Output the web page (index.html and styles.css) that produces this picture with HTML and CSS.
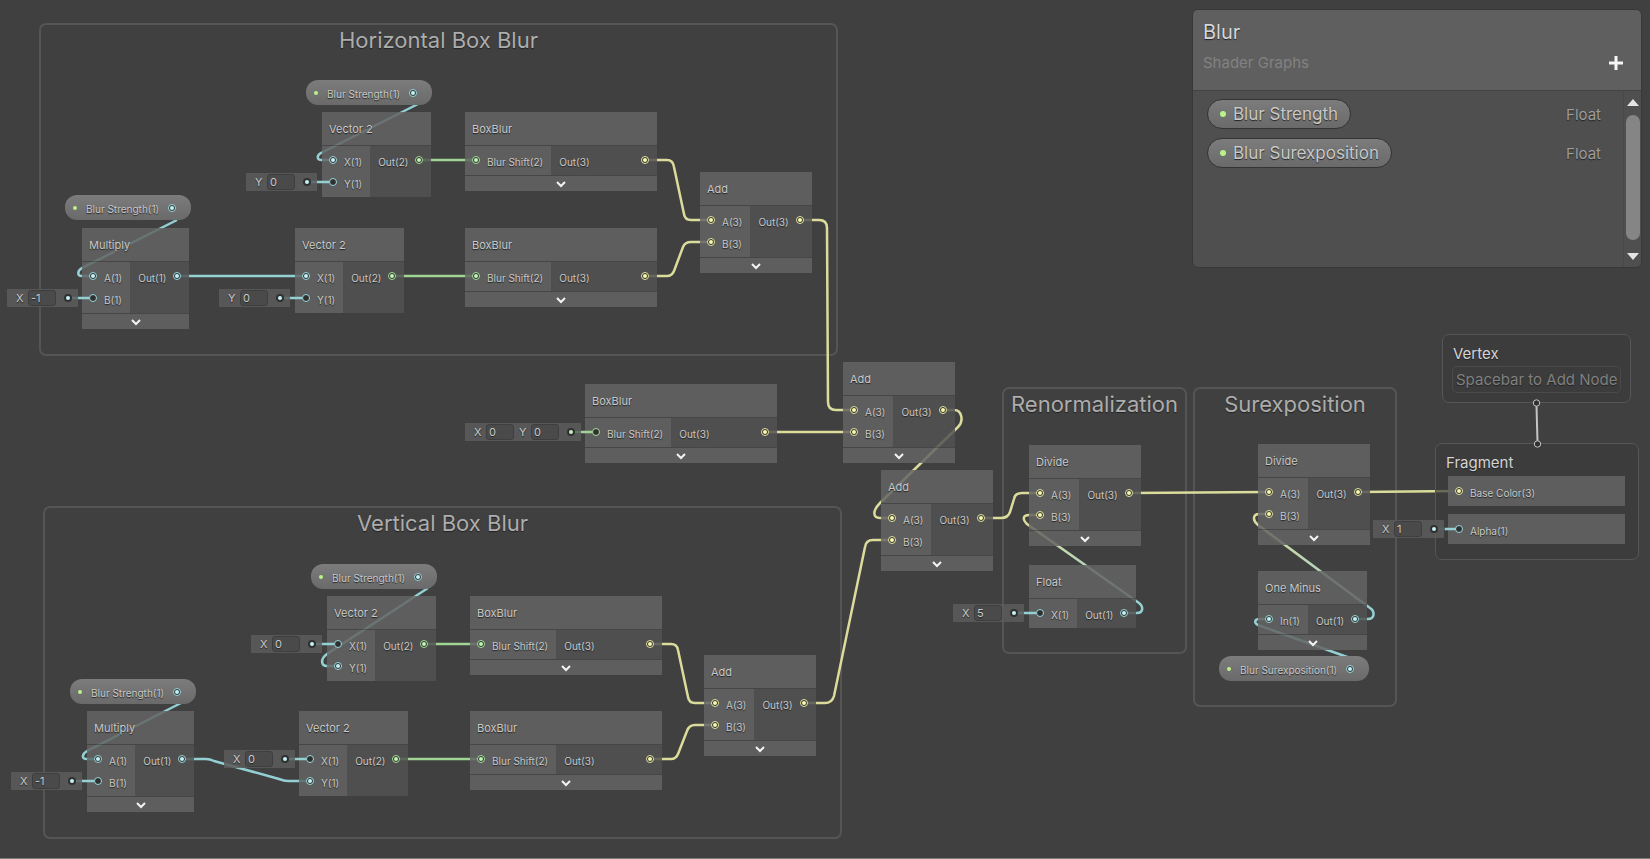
FILE: index.html
```html
<!DOCTYPE html>
<html lang="en">
<head>
<meta charset="utf-8">
<title>Blur - Shader Graph</title>
<link rel="stylesheet" href="styles.css">
</head>
<body>
<main class="canvas">
  <section class="group group-horizontal"><h2>Horizontal Box Blur</h2></section>
  <section class="group group-vertical"><h2>Vertical Box Blur</h2></section>
  <section class="group group-renormalization"><h2>Renormalization</h2></section>
  <section class="group group-surexposition"><h2>Surexposition</h2></section>

  <svg class="wires" stroke-width="2.500" aria-hidden="true">
    <defs>
      <linearGradient id="fade-a" gradientUnits="userSpaceOnUse" x1="1138" y1="614" x2="1027" y2="515"><stop offset="0" stop-color="#93cfd3"/><stop offset="1" stop-color="#dbdc9b"/></linearGradient>
      <linearGradient id="fade-b" gradientUnits="userSpaceOnUse" x1="1370" y1="619" x2="1257" y2="514"><stop offset="0" stop-color="#93cfd3"/><stop offset="1" stop-color="#dbdc9b"/></linearGradient>
    </defs>
    <g class="wire-float">
      <path d="M418 104L321 153C317 155 316 160 322 160H333"/>
      <path d="M177 220L82 268C77 271 77 276 82 276H93"/>
      <path d="M180 276H306"/>
      <path d="M428 588L327 654C320 659 321 666 327 666H338"/>
      <path d="M181 703L87 751C82 754 81 759 87 759H98"/>
      <path d="M184 759H206Q210 759 214 761L279 779Q284 781 288 781H310"/>
      <path d="M1350 658L1258 625C1254 623 1254 619 1260 619H1269"/>
      <path d="M308 182H318M68 298H78M281 298H291M312 644H323M73 781H83M285 759H296M1014 613H1025M1434 529H1445"/>
    </g>
    <g class="wire-vec2">
      <path d="M420 160H476M393 276H476M425 644H480M398 759H480M571 432H581"/>
    </g>
    <g class="wire-vec3">
      <path d="M646 160H667Q673 160 674 167L684 214Q685 220 691 220H711"/>
      <path d="M646 276H667Q672 276 674 271L683 247Q685 242 691 242H711"/>
      <path d="M801 220H819Q827 220 827 228L828 402Q828 410 836 410H854"/>
      <path d="M766 432H854"/>
      <path d="M944 410H954C962 410 964 421 958 427L880 503C872 511 873 518 880 518H892"/>
      <path d="M650 644H671Q677 644 678 650L688 697Q689 703 695 703H715"/>
      <path d="M650 759H671Q676 759 678 754L687 731Q689 725 695 725H715"/>
      <path d="M805 703H825Q832 703 834 696L865 547Q866 540 873 540H892"/>
      <path d="M982 518H1001Q1008 518 1010 512L1014 499Q1015 493 1022 493H1040"/>
      <path d="M1130 493L1269 492"/>
      <path d="M1359 492L1459 491"/>
    </g>
    <path stroke="url(#fade-a)" d="M1126 613H1137C1143 613 1144 607 1139 603L1027 524C1022 519 1023 515 1029 515H1040"/>
    <path stroke="url(#fade-b)" d="M1357 619H1368C1375 619 1375 611 1370 608L1258 525C1252 520 1253 514 1259 514H1269"/>
  </svg>

  <!-- Horizontal Box Blur -->
  <div class="token at-h-token-a"><i class="dot"></i><span>Blur Strength(1)</span><i class="port float on"></i></div>
  <article class="node at-h-vector-a">
    <h3>Vector 2</h3>
    <div class="ports">
      <ul class="in"><li><i class="port float on"></i><span>X(1)</span></li><li><i class="port float"></i><span>Y(1)</span></li></ul>
      <ul class="out"><li><span>Out(2)</span><i class="port vec2 on"></i></li></ul>
    </div>
  </article>
  <div class="slot at-h-slot-a"><label for="h-slot-a">Y</label><input id="h-slot-a" value="0"><i class="pin float"></i></div>
  <article class="node wide at-h-box-a">
    <h3>BoxBlur</h3>
    <div class="ports">
      <ul class="in"><li><i class="port vec2 on"></i><span>Blur Shift(2)</span></li></ul>
      <ul class="out"><li><span>Out(3)</span><i class="port vec3 on"></i></li></ul>
    </div>
    <button class="fold" aria-label="Collapse"><svg viewBox="0 0 12 8"><path d="M2 2L6 6L10 2"/></svg></button>
  </article>
  <div class="token at-h-token-b"><i class="dot"></i><span>Blur Strength(1)</span><i class="port float on"></i></div>
  <article class="node at-h-multiply">
    <h3>Multiply</h3>
    <div class="ports">
      <ul class="in"><li><i class="port float on"></i><span>A(1)</span></li><li><i class="port float"></i><span>B(1)</span></li></ul>
      <ul class="out"><li><span>Out(1)</span><i class="port float on"></i></li></ul>
    </div>
    <button class="fold" aria-label="Collapse"><svg viewBox="0 0 12 8"><path d="M2 2L6 6L10 2"/></svg></button>
  </article>
  <div class="slot at-h-slot-b"><label for="h-slot-b">X</label><input id="h-slot-b" value="-1"><i class="pin float"></i></div>
  <article class="node at-h-vector-b">
    <h3>Vector 2</h3>
    <div class="ports">
      <ul class="in"><li><i class="port float on"></i><span>X(1)</span></li><li><i class="port float"></i><span>Y(1)</span></li></ul>
      <ul class="out"><li><span>Out(2)</span><i class="port vec2 on"></i></li></ul>
    </div>
  </article>
  <div class="slot at-h-slot-c"><label for="h-slot-c">Y</label><input id="h-slot-c" value="0"><i class="pin float"></i></div>
  <article class="node wide at-h-box-b">
    <h3>BoxBlur</h3>
    <div class="ports">
      <ul class="in"><li><i class="port vec2 on"></i><span>Blur Shift(2)</span></li></ul>
      <ul class="out"><li><span>Out(3)</span><i class="port vec3 on"></i></li></ul>
    </div>
    <button class="fold" aria-label="Collapse"><svg viewBox="0 0 12 8"><path d="M2 2L6 6L10 2"/></svg></button>
  </article>
  <article class="node at-h-add">
    <h3>Add</h3>
    <div class="ports">
      <ul class="in"><li><i class="port vec3 on"></i><span>A(3)</span></li><li><i class="port vec3 on"></i><span>B(3)</span></li></ul>
      <ul class="out"><li><span>Out(3)</span><i class="port vec3 on"></i></li></ul>
    </div>
    <button class="fold" aria-label="Collapse"><svg viewBox="0 0 12 8"><path d="M2 2L6 6L10 2"/></svg></button>
  </article>

  <!-- Centre sample and sums -->
  <div class="slot at-m-slot"><label for="m-slot-x">X</label><input id="m-slot-x" value="0"><label for="m-slot-y" class="next">Y</label><input id="m-slot-y" value="0"><i class="pin vec2"></i></div>
  <article class="node wide at-m-box">
    <h3>BoxBlur</h3>
    <div class="ports">
      <ul class="in"><li><i class="port vec2"></i><span>Blur Shift(2)</span></li></ul>
      <ul class="out"><li><span>Out(3)</span><i class="port vec3 on"></i></li></ul>
    </div>
    <button class="fold" aria-label="Collapse"><svg viewBox="0 0 12 8"><path d="M2 2L6 6L10 2"/></svg></button>
  </article>
  <article class="node at-m-add-a">
    <h3>Add</h3>
    <div class="ports">
      <ul class="in"><li><i class="port vec3 on"></i><span>A(3)</span></li><li><i class="port vec3 on"></i><span>B(3)</span></li></ul>
      <ul class="out"><li><span>Out(3)</span><i class="port vec3 on"></i></li></ul>
    </div>
    <button class="fold" aria-label="Collapse"><svg viewBox="0 0 12 8"><path d="M2 2L6 6L10 2"/></svg></button>
  </article>
  <article class="node at-m-add-b">
    <h3>Add</h3>
    <div class="ports">
      <ul class="in"><li><i class="port vec3 on"></i><span>A(3)</span></li><li><i class="port vec3 on"></i><span>B(3)</span></li></ul>
      <ul class="out"><li><span>Out(3)</span><i class="port vec3 on"></i></li></ul>
    </div>
    <button class="fold" aria-label="Collapse"><svg viewBox="0 0 12 8"><path d="M2 2L6 6L10 2"/></svg></button>
  </article>

  <!-- Vertical Box Blur -->
  <div class="token at-v-token-a"><i class="dot"></i><span>Blur Strength(1)</span><i class="port float on"></i></div>
  <article class="node at-v-vector-a">
    <h3>Vector 2</h3>
    <div class="ports">
      <ul class="in"><li><i class="port float"></i><span>X(1)</span></li><li><i class="port float on"></i><span>Y(1)</span></li></ul>
      <ul class="out"><li><span>Out(2)</span><i class="port vec2 on"></i></li></ul>
    </div>
  </article>
  <div class="slot at-v-slot-a"><label for="v-slot-a">X</label><input id="v-slot-a" value="0"><i class="pin float"></i></div>
  <article class="node wide at-v-box-a">
    <h3>BoxBlur</h3>
    <div class="ports">
      <ul class="in"><li><i class="port vec2 on"></i><span>Blur Shift(2)</span></li></ul>
      <ul class="out"><li><span>Out(3)</span><i class="port vec3 on"></i></li></ul>
    </div>
    <button class="fold" aria-label="Collapse"><svg viewBox="0 0 12 8"><path d="M2 2L6 6L10 2"/></svg></button>
  </article>
  <div class="token at-v-token-b"><i class="dot"></i><span>Blur Strength(1)</span><i class="port float on"></i></div>
  <article class="node at-v-multiply">
    <h3>Multiply</h3>
    <div class="ports">
      <ul class="in"><li><i class="port float on"></i><span>A(1)</span></li><li><i class="port float"></i><span>B(1)</span></li></ul>
      <ul class="out"><li><span>Out(1)</span><i class="port float on"></i></li></ul>
    </div>
    <button class="fold" aria-label="Collapse"><svg viewBox="0 0 12 8"><path d="M2 2L6 6L10 2"/></svg></button>
  </article>
  <div class="slot at-v-slot-b"><label for="v-slot-b">X</label><input id="v-slot-b" value="-1"><i class="pin float"></i></div>
  <article class="node at-v-vector-b">
    <h3>Vector 2</h3>
    <div class="ports">
      <ul class="in"><li><i class="port float"></i><span>X(1)</span></li><li><i class="port float on"></i><span>Y(1)</span></li></ul>
      <ul class="out"><li><span>Out(2)</span><i class="port vec2 on"></i></li></ul>
    </div>
  </article>
  <div class="slot at-v-slot-c"><label for="v-slot-c">X</label><input id="v-slot-c" value="0"><i class="pin float"></i></div>
  <article class="node wide at-v-box-b">
    <h3>BoxBlur</h3>
    <div class="ports">
      <ul class="in"><li><i class="port vec2 on"></i><span>Blur Shift(2)</span></li></ul>
      <ul class="out"><li><span>Out(3)</span><i class="port vec3 on"></i></li></ul>
    </div>
    <button class="fold" aria-label="Collapse"><svg viewBox="0 0 12 8"><path d="M2 2L6 6L10 2"/></svg></button>
  </article>
  <article class="node at-v-add">
    <h3>Add</h3>
    <div class="ports">
      <ul class="in"><li><i class="port vec3 on"></i><span>A(3)</span></li><li><i class="port vec3 on"></i><span>B(3)</span></li></ul>
      <ul class="out"><li><span>Out(3)</span><i class="port vec3 on"></i></li></ul>
    </div>
    <button class="fold" aria-label="Collapse"><svg viewBox="0 0 12 8"><path d="M2 2L6 6L10 2"/></svg></button>
  </article>

  <!-- Renormalization -->
  <article class="node at-r-divide">
    <h3>Divide</h3>
    <div class="ports">
      <ul class="in"><li><i class="port vec3 on"></i><span>A(3)</span></li><li><i class="port vec3 on"></i><span>B(3)</span></li></ul>
      <ul class="out"><li><span>Out(3)</span><i class="port vec3 on"></i></li></ul>
    </div>
    <button class="fold" aria-label="Collapse"><svg viewBox="0 0 12 8"><path d="M2 2L6 6L10 2"/></svg></button>
  </article>
  <article class="node at-r-float">
    <h3>Float</h3>
    <div class="ports">
      <ul class="in"><li><i class="port float"></i><span>X(1)</span></li></ul>
      <ul class="out"><li><span>Out(1)</span><i class="port float on"></i></li></ul>
    </div>
  </article>
  <div class="slot at-r-slot"><label for="r-slot">X</label><input id="r-slot" value="5"><i class="pin float"></i></div>

  <!-- Surexposition -->
  <article class="node at-s-divide">
    <h3>Divide</h3>
    <div class="ports">
      <ul class="in"><li><i class="port vec3 on"></i><span>A(3)</span></li><li><i class="port vec3 on"></i><span>B(3)</span></li></ul>
      <ul class="out"><li><span>Out(3)</span><i class="port vec3 on"></i></li></ul>
    </div>
    <button class="fold" aria-label="Collapse"><svg viewBox="0 0 12 8"><path d="M2 2L6 6L10 2"/></svg></button>
  </article>
  <article class="node at-s-minus">
    <h3>One Minus</h3>
    <div class="ports">
      <ul class="in"><li><i class="port float on"></i><span>In(1)</span></li></ul>
      <ul class="out"><li><span>Out(1)</span><i class="port float on"></i></li></ul>
    </div>
    <button class="fold" aria-label="Collapse"><svg viewBox="0 0 12 8"><path d="M2 2L6 6L10 2"/></svg></button>
  </article>
  <div class="token at-s-token"><i class="dot"></i><span>Blur Surexposition(1)</span><i class="port float on"></i></div>

  <!-- Master stack -->
  <section class="stack at-vertex">
    <h2>Vertex</h2>
    <p class="hint">Spacebar to Add Node</p>
  </section>
  <section class="stack at-fragment">
    <h2>Fragment</h2>
    <ul class="blocks">
      <li><i class="port vec3 on"></i><span>Base Color(3)</span></li>
      <li><i class="port float"></i><span>Alpha(1)</span></li>
    </ul>
  </section>
  <div class="slot at-f-slot"><label for="f-slot">X</label><input id="f-slot" value="1"><i class="pin float"></i></div>

  <!-- Slot leads run over the node they feed -->
  <svg class="wires" stroke-width="2.500" aria-hidden="true">
    <path class="wire-float" d="M318 182H329M78 298H89M291 298H302M323 644H334M83 781H94M296 759H306M1025 613H1036M1445 529H1456"/>
    <path class="wire-vec2" d="M581 432H592"/>
  </svg>
  <svg class="link" viewBox="0 0 10 50" aria-hidden="true">
    <path d="M4.500 7L5.500 43"/><circle cx="4.500" cy="4" r="3.200"/><circle cx="5.500" cy="45" r="3.200"/>
  </svg>

  <aside class="board">
    <header>
      <div><h1>Blur</h1><p>Shader Graphs</p></div>
      <button class="plus" aria-label="Add property"><svg viewBox="0 0 14 14"><path d="M7 0V14M0 7H14"/></svg></button>
    </header>
    <div class="board-body">
      <ul class="properties">
        <li><span class="pill"><i class="dot"></i>Blur Strength</span><span class="type">Float</span></li>
        <li><span class="pill"><i class="dot"></i>Blur Surexposition</span><span class="type">Float</span></li>
      </ul>
      <div class="scroller">
        <button aria-label="Scroll up"><svg viewBox="0 0 12 8"><path d="M6 0L12 7H0Z"/></svg></button>
        <span class="thumb"></span>
        <button aria-label="Scroll down"><svg viewBox="0 0 12 8"><path d="M6 8L12 1H0Z"/></svg></button>
      </div>
    </div>
  </aside>
</main>
</body>
</html>
```
FILE: styles.css
```css
* { box-sizing: border-box; }

body {
  margin: 0;
  background: #404040;
  color: #c9c9c9;
  font-family: Inter, "Liberation Sans", sans-serif;
  text-shadow: 0 1px 1px #222222;
}

h1, h2, h3, p, ul { margin: 0; padding: 0; font-weight: 400; list-style: none; }

button { border: 0; padding: 0; background: none; cursor: pointer; }

svg { display: block; }

.canvas {
  position: relative;
  min-height: 100vh;
  overflow: hidden;
  border-bottom: 1px solid #7c7c7c;
}

/* Groups */
.group {
  position: absolute;
  border: 2px solid #555555;
  border-radius: 7px;
}
.group h2 {
  padding-top: 1px;
  color: #adadad;
  font-size: 22px;
  line-height: 28px;
  text-align: center;
}
.group-horizontal { left: 39px; top: 23px; width: 799px; height: 333px; }
.group-vertical { left: 43px; top: 506px; width: 799px; height: 333px; }
.group-renormalization { left: 1002px; top: 387px; width: 185px; height: 267px; }
.group-surexposition { left: 1193px; top: 387px; width: 204px; height: 320px; }

/* Wires */
.wires {
  position: absolute;
  inset: 0;
  width: 100%;
  height: 100%;
  fill: none;
  pointer-events: none;
}
.wire-float { stroke: #93cfd3; }
.wire-vec2 { stroke: #9fd494; }
.wire-vec3 { stroke: #dbdc9b; }

/* Ports */
.float { --tint: #9bd9dd; --core: #c3f3f7; }
.vec2 { --tint: #a8e09d; --core: #bff5b5; }
.vec3 { --tint: #e6e7a2; --core: #f8f8b0; }

.port, .pin {
  display: flex;
  flex: none;
  align-items: center;
  justify-content: center;
  width: 8px;
  height: 8px;
  border-radius: 50%;
  background: #303030;
}
.port { border: 1px solid var(--tint); }
.port.on::before, .pin::before {
  content: "";
  width: 4px;
  height: 4px;
  border-radius: 50%;
  background: var(--core);
}

/* Nodes: translucent so the wires show through dimmed */
.node {
  position: absolute;
  display: flex;
  flex-direction: column;
}
.wide { width: 192px; }
.node h3 {
  padding: 1px 7px 0;
  border-bottom: 1px solid rgba(0, 0, 0, .25);
  background: rgba(100, 100, 100, .85);
  font-size: 11px;
  line-height: 32px;
}
.ports {
  display: flex;
  font-size: 10px;
  line-height: 14px;
}
.ports ul { padding: 3px 8px 4px 7px; }
.ports li {
  display: flex;
  align-items: center;
  gap: 7px;
  height: 22px;
}
.ports span, .token span, .blocks span { padding-top: 3px; }
.in { background: rgba(100, 100, 100, .85); }
.ports .out { flex: 1; padding-left: 8px; background: rgba(82, 82, 82, .85); }
.out li { justify-content: space-between; }
.fold {
  display: flex;
  align-items: center;
  justify-content: center;
  height: 16px;
  border-top: 1px solid rgba(0, 0, 0, .25);
  background: rgba(100, 100, 100, .85);
}
.fold svg { width: 12px; height: 8px; fill: none; stroke: #f4f4f4; stroke-width: 2px; }

/* Property tokens */
.token {
  position: absolute;
  display: flex;
  align-items: center;
  gap: 9px;
  height: 25px;
  padding: 0 15px 0 8px;
  border-radius: 12px;
  background: linear-gradient(#7c7c7c, #6a6a6a);
  font-size: 10px;
  line-height: 14px;
}
.dot {
  flex: none;
  width: 4px;
  height: 4px;
  border-radius: 50%;
  background: #b9f28a;
}

/* Inline slot values */
.slot {
  position: absolute;
  display: flex;
  align-items: center;
  height: 18px;
  padding: 0 6px 0 9px;
  background: rgba(92, 92, 92, .85);
  font-size: 11px;
}
.slot label { width: 12px; }
.slot .next { margin-left: 5px; }
.slot input {
  width: 28px;
  height: 16px;
  padding: 0 2px;
  border: 1px solid #3e3e3e;
  border-radius: 3px;
  background: #4a4a4a;
  color: inherit;
  font: inherit;
  text-shadow: inherit;
}
.pin { margin-left: 8px; }

/* Positions on the graph */
.at-h-token-a { left: 306px; top: 80px; }
.at-h-vector-a { left: 322px; top: 112px; }
.at-h-slot-a { left: 246px; top: 173px; }
.at-h-box-a { left: 465px; top: 112px; }
.at-h-token-b { left: 65px; top: 195px; }
.at-h-multiply { left: 82px; top: 228px; }
.at-h-slot-b { left: 7px; top: 289px; }
.at-h-vector-b { left: 295px; top: 228px; }
.at-h-slot-c { left: 219px; top: 289px; }
.at-h-box-b { left: 465px; top: 228px; }
.at-h-add { left: 700px; top: 172px; }
.at-m-slot { left: 465px; top: 423px; }
.at-m-box { left: 585px; top: 384px; }
.at-m-add-a { left: 843px; top: 362px; }
.at-m-add-b { left: 881px; top: 470px; }
.at-v-token-a { left: 311px; top: 564px; }
.at-v-vector-a { left: 327px; top: 596px; }
.at-v-slot-a { left: 251px; top: 635px; }
.at-v-box-a { left: 470px; top: 596px; }
.at-v-token-b { left: 70px; top: 679px; }
.at-v-multiply { left: 87px; top: 711px; }
.at-v-slot-b { left: 11px; top: 772px; }
.at-v-vector-b { left: 299px; top: 711px; }
.at-v-slot-c { left: 224px; top: 750px; }
.at-v-box-b { left: 470px; top: 711px; }
.at-v-add { left: 704px; top: 655px; }
.at-r-divide { left: 1029px; top: 445px; }
.at-r-float { left: 1029px; top: 565px; }
.at-r-slot { left: 953px; top: 604px; }
.at-s-divide { left: 1258px; top: 444px; }
.at-s-minus { left: 1258px; top: 571px; }
.at-s-token { left: 1219px; top: 656px; }
.at-vertex { left: 1442px; top: 334px; }
.at-fragment { left: 1435px; top: 443px; width: 204px; }
.at-f-slot { left: 1373px; top: 520px; }

/* Master stack */
.stack {
  position: absolute;
  padding: 9px;
  border: 1px solid #565656;
  border-radius: 7px;
  background: rgba(58, 58, 58, .7);
}
.stack h2 {
  padding: 0 1px;
  color: #d4d4d4;
  font-size: 15px;
  line-height: 20px;
}
.hint {
  margin-top: 2px;
  padding: 0 3px;
  border: 1px solid #4a4a4a;
  border-radius: 5px;
  color: #808080;
  font-size: 15px;
  line-height: 25px;
}
.blocks {
  display: grid;
  gap: 8px;
  padding: 3px 4px 6px 3px;
  font-size: 10px;
  line-height: 14px;
}
.blocks li {
  display: flex;
  align-items: center;
  gap: 7px;
  height: 30px;
  padding: 0 7px;
  background: rgba(100, 100, 100, .85);
}
.link {
  position: absolute;
  left: 1532px;
  top: 399px;
  width: 10px;
  height: 50px;
  fill: #303030;
  stroke: #c4c4c4;
  stroke-width: 1px;
}
.link path { stroke-width: 2px; }

/* Blackboard */
.board {
  position: absolute;
  right: 8px;
  top: 9px;
  display: flex;
  flex-direction: column;
  width: 450px;
  height: 259px;
  overflow: hidden;
  border: 1px solid #383838;
  border-radius: 6px;
  background: #4f4f4f;
}
.board header {
  display: flex;
  align-items: flex-end;
  justify-content: space-between;
  height: 81px;
  padding: 0 18px 15px 10px;
  border-bottom: 1px solid #434343;
  background: #5f5f5f;
}
.board h1 { color: #d6d6d6; font-size: 20px; line-height: 28px; }
.board header p { padding-top: 5px; color: #828282; font-size: 15px; line-height: 24px; text-shadow: none; }
.plus { margin-bottom: 5px; }
.plus svg { width: 14px; height: 14px; stroke: #f6f6f6; stroke-width: 3px; }
.board-body { display: flex; flex: 1; }
.properties {
  display: grid;
  flex: 1;
  align-content: start;
  gap: 9px;
  padding: 8px 22px 0 14px;
}
.properties li { display: flex; align-items: center; justify-content: space-between; }
.pill {
  display: flex;
  align-items: center;
  gap: 7px;
  height: 30px;
  padding: 0 12px;
  border: 1px solid #343434;
  border-radius: 15px;
  background: linear-gradient(#7c7c7c, #6a6a6a);
  font-size: 17px;
  line-height: 26px;
}
.pill .dot { width: 6px; height: 6px; }
.type { color: #9c9c9c; font-size: 15px; }
.scroller {
  display: flex;
  flex-direction: column;
  align-items: center;
  width: 18px;
  padding: 8px 0 7px;
  border-left: 1px solid #484848;
}
.scroller svg { width: 12px; height: 8px; fill: #e4e4e4; }
.thumb {
  width: 14px;
  height: 125px;
  margin: 8px 0 auto;
  border-radius: 7px;
  background: #858585;
}
```
